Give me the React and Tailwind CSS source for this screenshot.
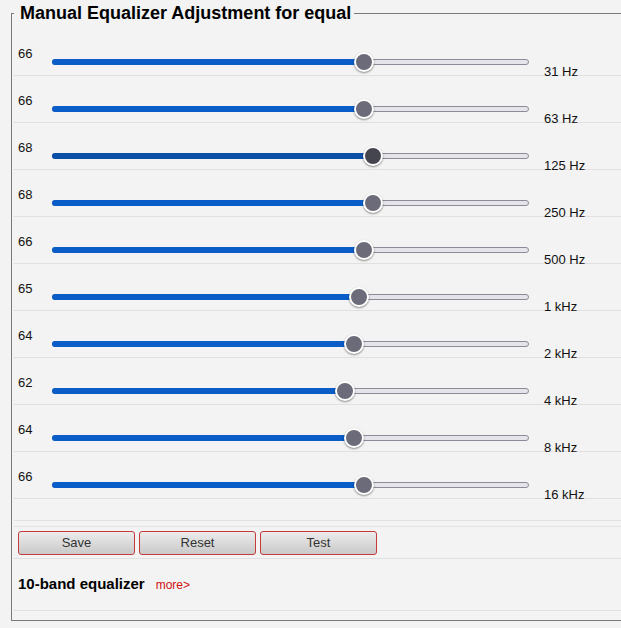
import React from 'react'

const bands = [
  { value: 66, label: '31 Hz' },
  { value: 66, label: '63 Hz' },
  { value: 68, label: '125 Hz', active: true },
  { value: 68, label: '250 Hz' },
  { value: 66, label: '500 Hz' },
  { value: 65, label: '1 kHz' },
  { value: 64, label: '2 kHz' },
  { value: 62, label: '4 kHz' },
  { value: 64, label: '8 kHz' },
  { value: 66, label: '16 kHz' },
]

function Slider({ value, active }) {
  // track 477px, thumb radius 10 -> thumb centre runs 10..467
  const centre = 10 + (value / 100) * 457
  return (
    <div className="relative w-[477px] h-[6px] mt-[30px]">
      <div className="absolute inset-0 rounded-full bg-[#e4e4ea] border border-[#8c8c98]" />
      <div
        className={`absolute left-0 top-0 h-[6px] rounded-l-full ${active ? 'bg-[#0b4fa6]' : 'bg-[#0a5cc9]'}`}
        style={{ width: centre }}
      />
      <div
        className={`absolute top-[-7px] w-[20px] h-[20px] rounded-full border-2 border-white shadow-[0_1px_2px_rgba(0,0,0,0.45)] ${active ? 'bg-[#45454f]' : 'bg-[#6b6b79]'}`}
        style={{ left: centre - 10 }}
      />
    </div>
  )
}

function Button({ children }) {
  return (
    <button className="w-[117px] h-[24px] rounded-[3px] border border-[#c43a3a] bg-gradient-to-b from-[#ececec] to-[#c9c9c9] text-[13px] text-[#333]">
      {children}
    </button>
  )
}

export default function App() {
  return (
    <div className="w-[621px] h-[628px] overflow-hidden bg-[#f3f3f3] font-['Liberation_Sans',Arial,sans-serif] text-[#111]">
      <fieldset className="ml-[11px] mt-[3px] w-[620px] h-[618px] border border-[#7a7a7a] pl-[2px]">
        <legend className="pl-[6px] pr-[3px] text-[18px] leading-[20px] font-bold text-black">
          Manual Equalizer Adjustment for equal
        </legend>
        <div className="pt-[6px]">
          {bands.map((b) => (
            <div key={b.label} className="flex items-start h-[47px] border-b border-[#e0e0e0]">
              <div className="w-[38px] pl-[4px] pt-[17px] text-[13px] leading-[15px]">{b.value}</div>
              <Slider value={b.value} active={b.active} />
              <div className="ml-[15px] pt-[35px] text-[13px] leading-[15px]">{b.label}</div>
            </div>
          ))}
          <div className="h-[22px] border-b border-[#e0e0e0]" />
          <div className="h-[6px] border-b border-[#e4e4e4]" />
          <div className="flex gap-[4px] pl-[4px] pt-[4px] pb-[3px] border-b border-[#e0e0e0]">
            <Button>Save</Button>
            <Button>Reset</Button>
            <Button>Test</Button>
          </div>
          <div className="flex items-center h-[52px] pl-[4px] border-b border-[#e0e0e0]">
            <span className="text-[15px] font-bold text-black">10-band equalizer</span>
            <a className="ml-[11px] text-[12px] text-[#d01010]">more&gt;</a>
          </div>
        </div>
      </fieldset>
    </div>
  )
}
